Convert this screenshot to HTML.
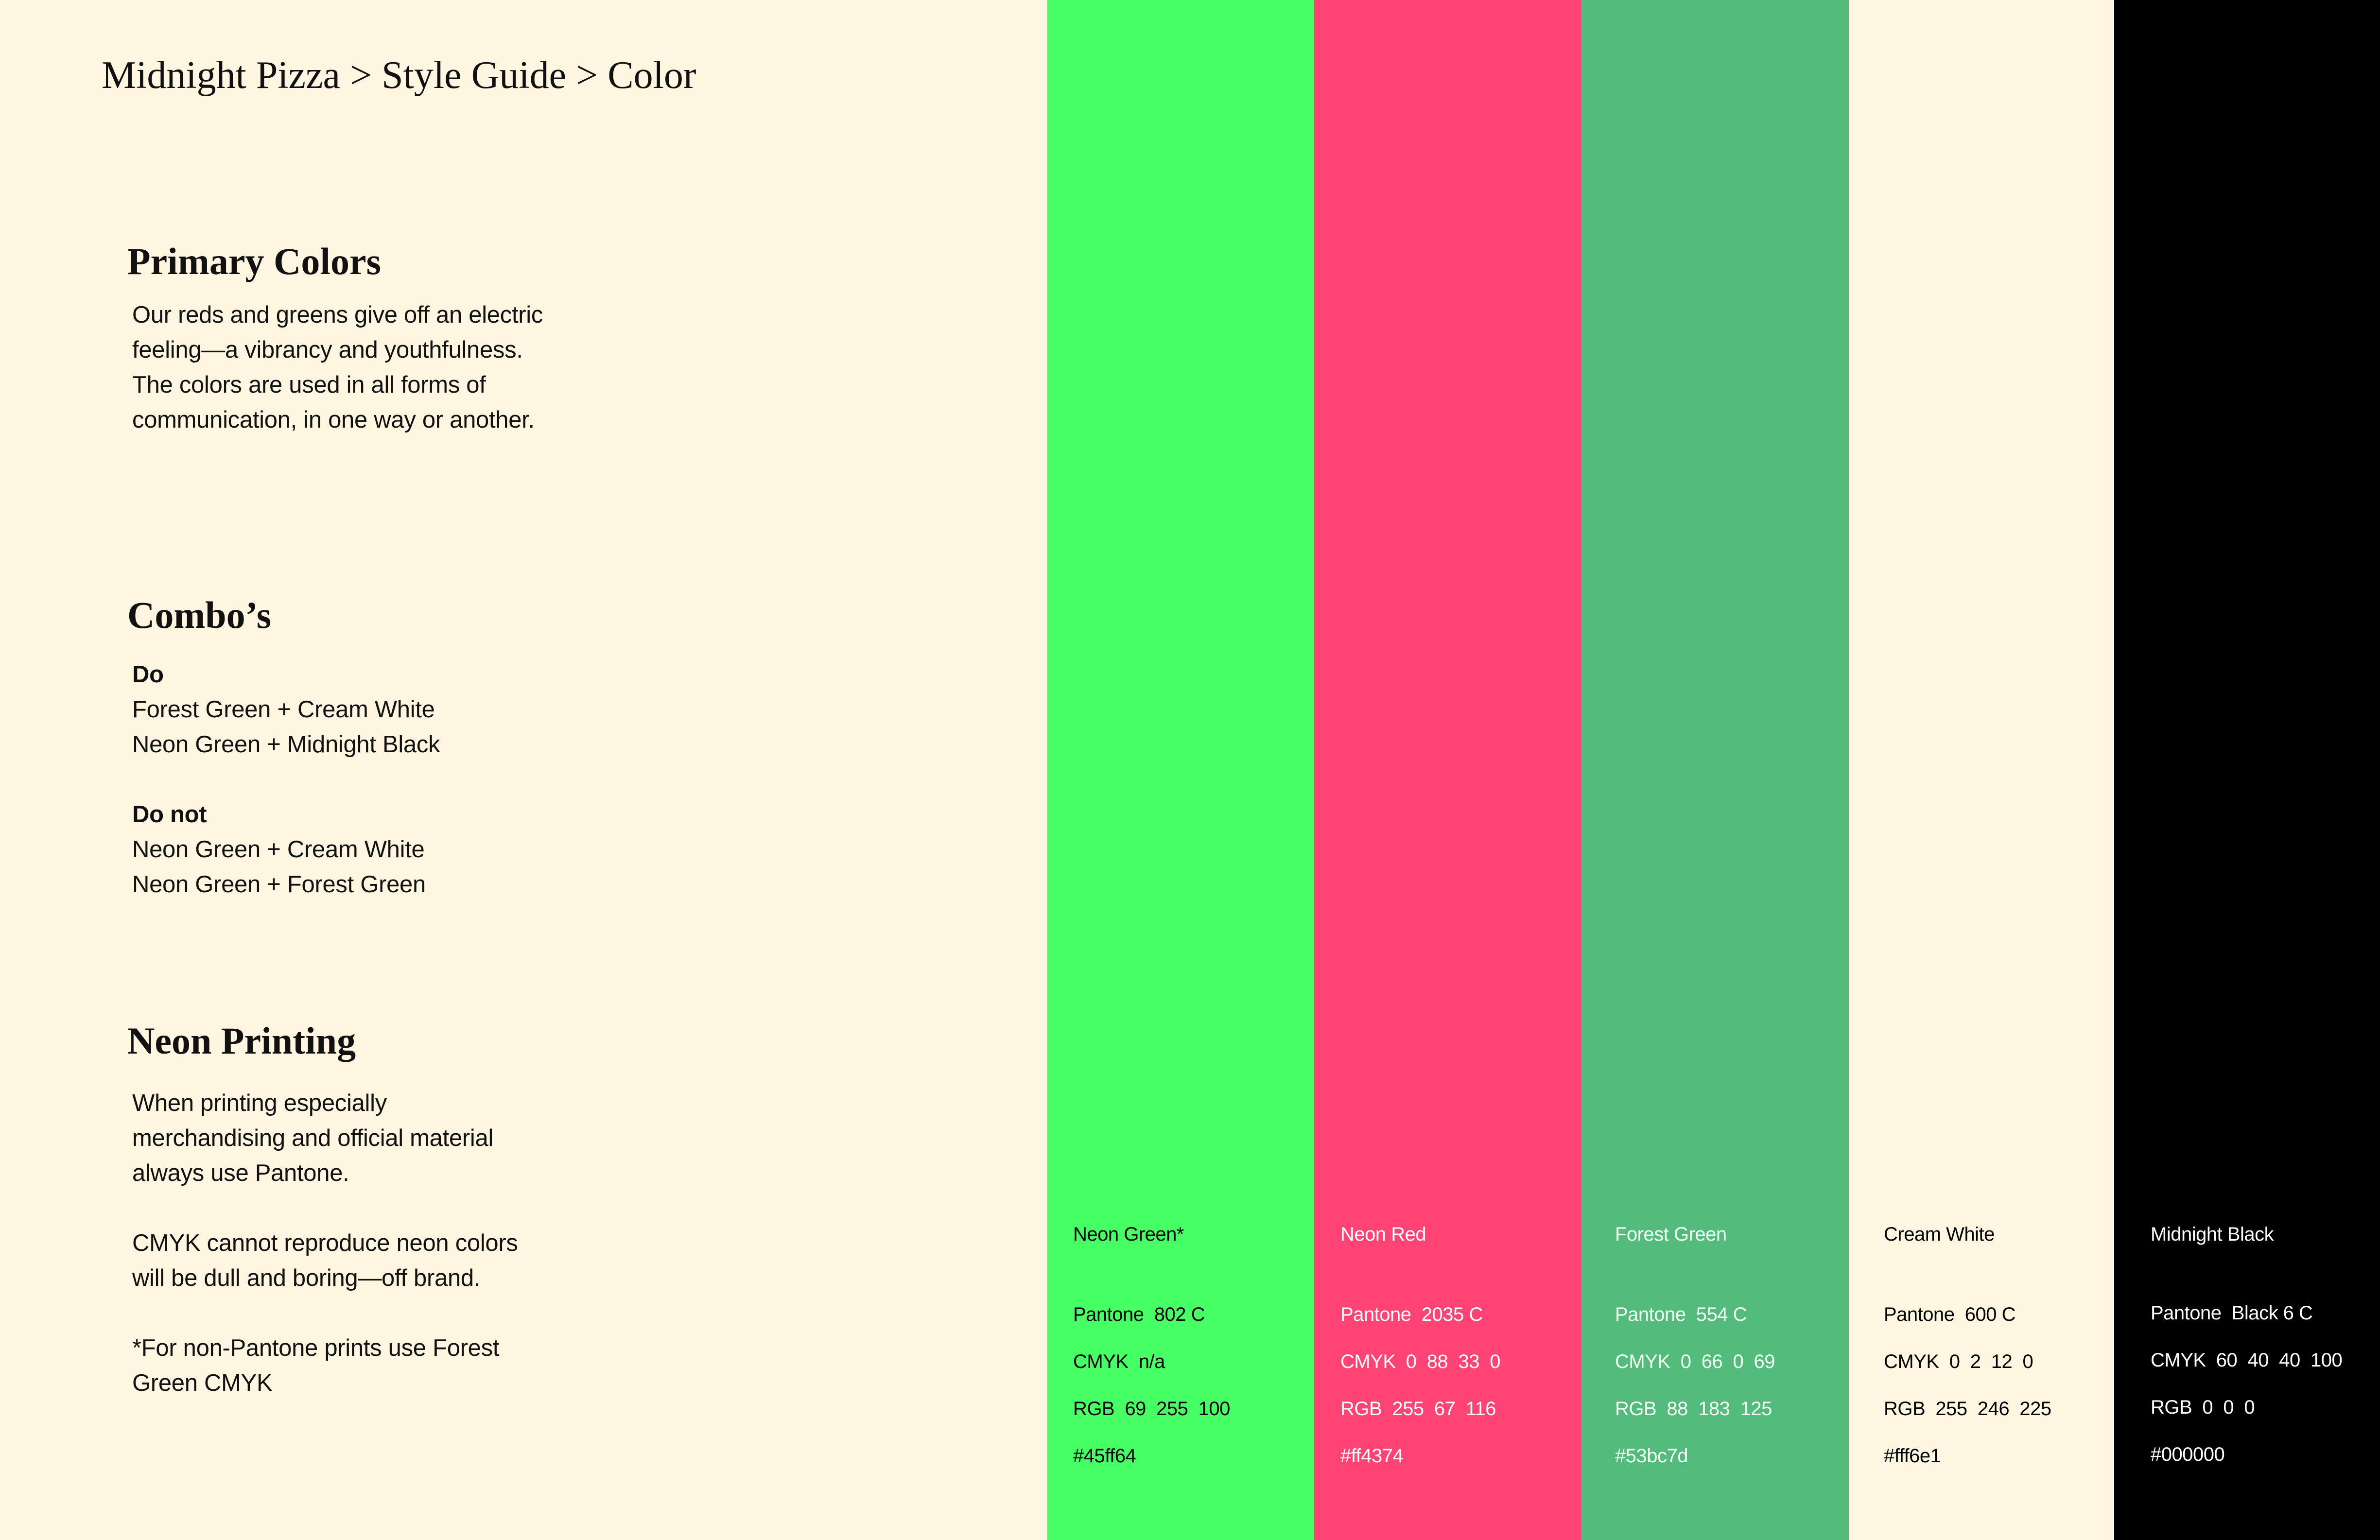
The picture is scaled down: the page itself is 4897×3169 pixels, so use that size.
<!DOCTYPE html>
<html><head><meta charset="utf-8"><style>
html,body{margin:0;padding:0}
body{width:4897px;height:3169px;position:relative;background:#fff6e1;overflow:hidden;color:#111}
.a{position:absolute;white-space:nowrap}
.serif{font-family:"Liberation Serif",serif}
.sans{font-family:"Liberation Sans",sans-serif}
.col{position:absolute;top:0;height:3169px}
.t{position:absolute;font-family:"Liberation Sans",sans-serif;font-size:40px;letter-spacing:-0.5px;white-space:pre;line-height:48px}
.body{font-family:"Liberation Sans",sans-serif;font-size:49px;line-height:72px;letter-spacing:-0.3px}
</style></head><body>
<div class="a serif" style="left:209px;top:110px;font-size:80px;line-height:90px">Midnight Pizza &gt; Style Guide &gt; Color</div>

<div class="a serif" style="left:262px;top:493px;font-size:78px;line-height:90px;font-weight:bold">Primary Colors</div>
<div class="a body" style="left:272px;top:612px">Our reds and greens give off an electric<br>feeling—a vibrancy and youthfulness.<br>The colors are used in all forms of<br>communication, in one way or another.</div>

<div class="a serif" style="left:262px;top:1221px;font-size:78px;line-height:90px;font-weight:bold">Combo’s</div>
<div class="a body" style="left:272px;top:1352px"><b style="font-weight:bold">Do</b><br>Forest Green + Cream White<br>Neon Green + Midnight Black<br><br><b>Do not</b><br>Neon Green + Cream White<br>Neon Green + Forest Green</div>

<div class="a serif" style="left:262px;top:2097px;font-size:78px;line-height:90px;font-weight:bold">Neon Printing</div>
<div class="a body" style="left:272px;top:2234px">When printing especially<br>merchandising and official material<br>always use Pantone.<br><br>CMYK cannot reproduce neon colors<br>will be dull and boring—off brand.<br><br>*For non-Pantone prints use Forest<br>Green CMYK</div>

<div class="col" style="left:2155px;width:549px;background:#45ff64;color:#000">
<div class="t" style="left:53px;top:2516px">Neon Green*</div>
<div class="t" style="left:53px;top:2681px">Pantone  802 C</div>
<div class="t" style="left:53px;top:2778px">CMYK  n/a</div>
<div class="t" style="left:53px;top:2875px">RGB  69  255  100</div>
<div class="t" style="left:53px;top:2972px">#45ff64</div>
</div>
<div class="col" style="left:2704px;width:550px;background:#ff4374;color:#fff">
<div class="t" style="left:54px;top:2516px">Neon Red</div>
<div class="t" style="left:54px;top:2681px">Pantone  2035 C</div>
<div class="t" style="left:54px;top:2778px">CMYK  0  88  33  0</div>
<div class="t" style="left:54px;top:2875px">RGB  255  67  116</div>
<div class="t" style="left:54px;top:2972px">#ff4374</div>
</div>
<div class="col" style="left:3254px;width:550px;background:#53bc7d;color:#f4fff6">
<div class="t" style="left:69px;top:2516px">Forest Green</div>
<div class="t" style="left:69px;top:2681px">Pantone  554 C</div>
<div class="t" style="left:69px;top:2778px">CMYK  0  66  0  69</div>
<div class="t" style="left:69px;top:2875px">RGB  88  183  125</div>
<div class="t" style="left:69px;top:2972px">#53bc7d</div>
</div>
<div class="col" style="left:3804px;width:546px;background:#fff6e1;color:#000">
<div class="t" style="left:72px;top:2516px">Cream White</div>
<div class="t" style="left:72px;top:2681px">Pantone  600 C</div>
<div class="t" style="left:72px;top:2778px">CMYK  0  2  12  0</div>
<div class="t" style="left:72px;top:2875px">RGB  255  246  225</div>
<div class="t" style="left:72px;top:2972px">#fff6e1</div>
</div>
<div class="col" style="left:4350px;width:547px;background:#000;color:#fff">
<div class="t" style="left:75px;top:2516px">Midnight Black</div>
<div class="t" style="left:75px;top:2678px">Pantone  Black 6 C</div>
<div class="t" style="left:75px;top:2775px">CMYK  60  40  40  100</div>
<div class="t" style="left:75px;top:2872px">RGB  0  0  0</div>
<div class="t" style="left:75px;top:2969px">#000000</div>
</div>
</body></html>
